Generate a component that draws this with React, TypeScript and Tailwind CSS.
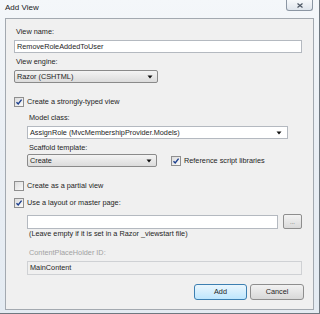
const Check = ({ on }: { on: boolean }) => (
  <div className="w-[10px] h-[10px] border border-[#8f8f8f] bg-gradient-to-br from-[#dcdcdc] to-[#fafafa] flex items-center justify-center shrink-0">
    {on && (
      <svg width="8" height="8" viewBox="0 0 8 8">
        <path d="M1.5 4.2 L3.2 6 L6.6 1.6" fill="none" stroke="#1c3f8f" strokeWidth="1.4" />
      </svg>
    )}
  </div>
);

const Arrow = () => (
  <svg width="6" height="4" viewBox="0 0 6 4" className="shrink-0">
    <path d="M0.5 0.5 L5.5 0.5 L3 3.5 Z" fill="#111" />
  </svg>
);

const DropList: React.FC<{ text: string; w: string }> = ({ text, w }) => (
  <div className={`${w} h-[13px] border border-[#8a8a8a] rounded-[2px] bg-gradient-to-b from-[#f4f4f4] to-[#dcdcdc] flex items-center justify-between pl-[2px] pr-[4px]`}>
    <span>{text}</span>
    <Arrow />
  </div>
);

const App: React.FC = () => {
  return (
    <div
      className="w-[320px] h-[314px] bg-gradient-to-b from-[#f4f7fa] via-[#e9eef4] to-[#e4ebf2] flex flex-col px-[5px] pb-[3px] border-r border-b border-[#6f7880] text-[#1e1e1e] text-[7.3px] leading-[10px]"
      style={{ fontFamily: '"Liberation Sans", Arial, sans-serif' }}
    >
      <div className="h-[18px] flex justify-between items-start">
        <span className="text-[8px] mt-[3px] text-[#1a1a1a]">Add View</span>
        <div className="w-[27px] h-[11px] mr-[1px] border border-t-0 border-[#8b96a3] rounded-b-[3px] bg-gradient-to-b from-[#f7f9fb] to-[#dfe5ec] flex items-center justify-center">
          <svg width="6" height="5" viewBox="0 0 6 5">
            <path d="M0.5 0.5 L5.5 4.5 M5.5 0.5 L0.5 4.5" stroke="#4a5461" strokeWidth="1.2" />
          </svg>
        </div>
      </div>

      <div className="flex-1 border border-[#a3a9b0] bg-[#f0f0f0] flex flex-col pl-[8px] pt-[8px]">
        <div className="h-[10px] ml-[2px]">View name:</div>
        <div className="mt-[3px] w-[288px] h-[13px] border border-[#b4b9c0] bg-white flex items-center pl-[2px]">RemoveRoleAddedToUser</div>
        <div className="mt-[4px] h-[10px] ml-[2px]">View engine:</div>
        <div className="mt-[3px]">
          <DropList text="Razor (CSHTML)" w="w-[144px]" />
        </div>

        <div className="mt-[14px] h-[10px] flex items-center gap-[3px]">
          <Check on />
          <span>Create a strongly-typed view</span>
        </div>

        <div className="pl-[13px] flex flex-col">
          <div className="mt-[6px] h-[10px] ml-[2px]">Model class:</div>
          <div className="mt-[3px] w-[261px] h-[13px] border border-[#b4b9c0] bg-white flex items-center justify-between pl-[2px] pr-[5px]">
            <span>AssignRole (MvcMembershipProvider.Models)</span>
            <Arrow />
          </div>
          <div className="mt-[4px] h-[10px] ml-[2px]">Scaffold template:</div>
          <div className="mt-[1px] h-[13px] flex items-center">
            <DropList text="Create" w="w-[130px]" />
            <div className="ml-[14px] mt-[1px] flex items-center gap-[3px]">
              <Check on />
              <span>Reference script libraries</span>
            </div>
          </div>
        </div>

        <div className="mt-[14px] h-[10px] flex items-center gap-[3px]">
          <Check on={false} />
          <span>Create as a partial view</span>
        </div>
        <div className="mt-[7px] h-[10px] flex items-center gap-[3px]">
          <Check on />
          <span>Use a layout or master page:</span>
        </div>

        <div className="pl-[13px] flex flex-col">
          <div className="mt-[6px] h-[15px] flex items-center gap-[5px]">
            <div className="w-[251px] h-[14px] border border-[#b4b9c0] bg-white" />
            <div className="w-[19px] h-[15px] border border-[#8e8e8e] rounded-[2px] bg-gradient-to-b from-[#f3f3f3] to-[#dadada] flex items-center justify-center text-[6px] text-[#555]">...</div>
          </div>
          <div className="h-[10px] ml-[2px]">(Leave empty if it is set in a Razor _viewstart file)</div>
          <div className="mt-[9px] h-[10px] ml-[2px] text-[#a2a2a2]">ContentPlaceHolder ID:</div>
          <div className="mt-[3px] w-[275px] h-[14px] border border-[#cfd1d4] bg-[#f0f0f0] flex items-center pl-[2px]">MainContent</div>
        </div>

        <div className="mt-[9px] flex justify-end gap-[3px] pr-[9px]">
          <div className="w-[53px] h-[16px] border border-[#3c7fb1] rounded-[3px] bg-gradient-to-b from-[#eaf6fd] to-[#bee6fd] flex items-center justify-center">Add</div>
          <div className="w-[54px] h-[16px] border border-[#8e8e8e] rounded-[3px] bg-gradient-to-b from-[#f2f2f2] to-[#d8d8d8] flex items-center justify-center">Cancel</div>
        </div>
      </div>
    </div>
  );
};

export default App;
